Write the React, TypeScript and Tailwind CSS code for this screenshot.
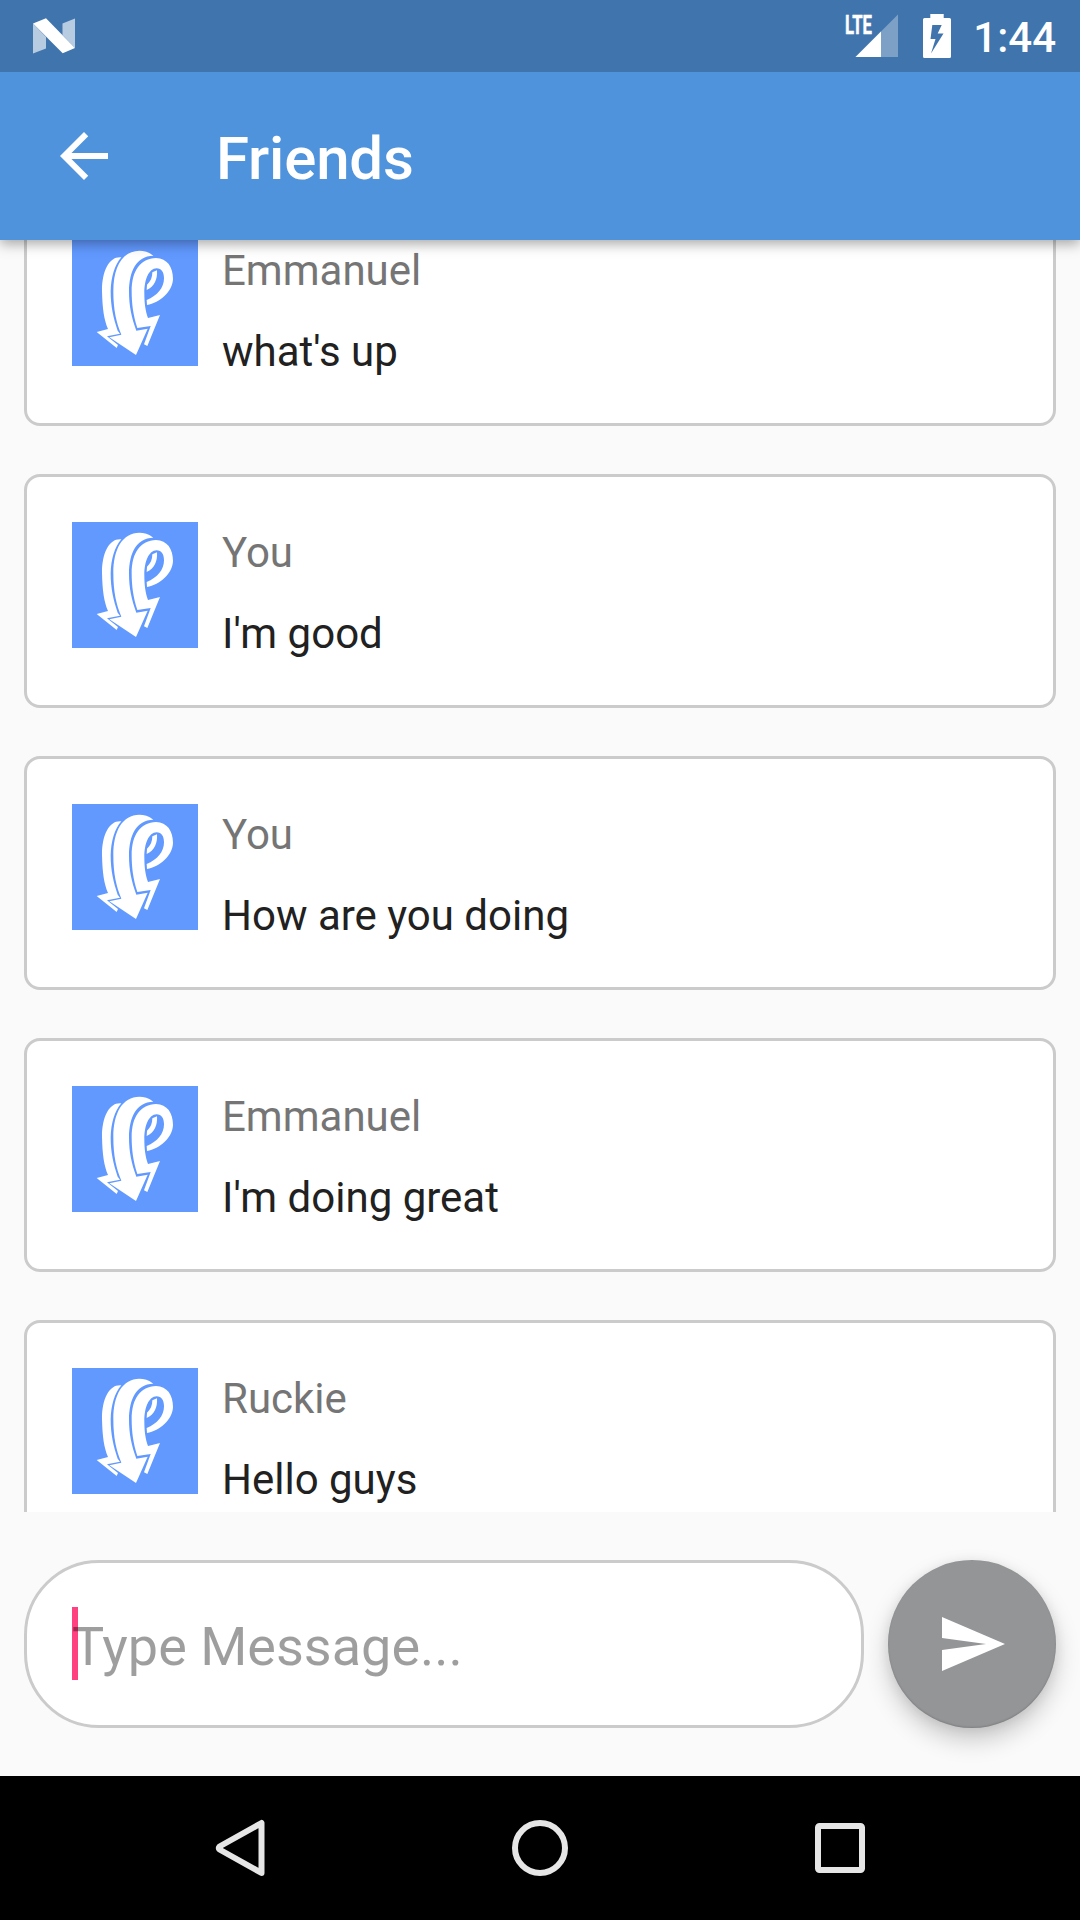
const messages = [
  { name: "Emmanuel", text: "what's up" },
  { name: "You", text: "I'm good" },
  { name: "You", text: "How are you doing" },
  { name: "Emmanuel", text: "I'm doing great" },
  { name: "Ruckie", text: "Hello guys" },
];

function Avatar() {
  return (
    <svg viewBox="36 36 378 378" className="size-[126px] shrink-0 bg-[#6199ff]" fill="#fff">
      <path d="M184 88C150 84 126 125 126 188C127 240 132 275 144 303L110 312L170 360L174 351L141 325L180 317L173 308C160 270 152 235 152 190C153 147 164 110 184 88Z" />
      <path d="M280 83C266 71 252 68 238 68C188 69 160 115 160 190C160 245 169 285 184 320L148 328L228 381L263 302L229 308C215 270 207 235 207 190C208 130 228 84 280 83Z" />
      <path d="M232 300C219 260 215 225 215 190C215 127 242 91 288 90C322 91 339 117 339 153C338 190 300 224 261 231L260 216C292 203 312 180 312 151C312 132 304 121 290 121C266 122 253 155 253 195C253 225 256 248 264 270L300 261L262 354L252 349L272 294Z" />
      <path d="M277 133L291 127C293 152 284 177 260 186L261 170C272 161 277 148 277 133Z" />
    </svg>
  );
}

function StatusBar() {
  return (
    <div className="relative z-20 flex h-[72px] shrink-0 items-start bg-[#4074ad] text-white">
      <svg viewBox="0 0 42 36" className="mt-[18px] ml-[33px] h-9 w-[42px]" fill="#fff">
        <path d="M0 5.5L13 19V30.5L0 35.5Z" opacity="0.63" />
        <path d="M29.5 5.5L42 .5V30L29.5 17Z" opacity="0.63" />
        <path d="M0 5.5L13 .3L42 30L29.7 35.3Z" />
      </svg>
      <svg viewBox="-4 -10 58 54" className="mt-1 ml-auto h-[54px] w-[58px] overflow-visible" fill="#fff">
        <path d="M10.5 43H53V.5Z" opacity="0.32" />
        <path d="M0 0H28V21H0Z" fill="#4074ad" />
        <path d="M10.5 43H36V17.5Z" />
        <text
          x="0"
          y="19.6"
          textLength="27"
          lengthAdjust="spacingAndGlyphs"
          stroke="#fff"
          strokeWidth="0.5"
          className="font-['Roboto'] text-[26px] font-bold"
        >
          LTE
        </text>
      </svg>
      <svg viewBox="0 0 28 44" className="mt-[14px] ml-6 h-[44px] w-[28px]">
        <path
          fill="#fff"
          fillRule="evenodd"
          d="M7.3 0H20.7V4H26.5Q28 4 28 5.5V42.5Q28 44 26.5 44H1.5Q0 44 0 42.5V5.5Q0 4 1.5 4H7.3ZM9.3 11L7.5 25H12.5L8 39.5L20.5 19.5H14.7L18.7 11Z"
        />
      </svg>
      <span className="mt-[14px] mr-[24px] ml-[22px] text-[42px] leading-[48px] font-medium">1:44</span>
    </div>
  );
}

export default function App() {
  return (
    <div className="flex h-[1920px] w-[1080px] flex-col overflow-hidden bg-[#fafafa] font-['Roboto',sans-serif]">
      <StatusBar />
      <header className="relative z-10 flex h-[168px] shrink-0 items-center bg-[#4e93db] text-white shadow-[0_4px_12px_rgba(0,0,0,0.34)]">
        <svg viewBox="0 0 24 24" className="ml-12 size-[72px]" fill="#fff">
          <path d="M20 11H7.83l5.59-5.59L12 4l-8 8 8 8 1.41-1.41L7.83 13H20v-2z" />
        </svg>
        <h1 className="mt-[6px] ml-24 text-[60px] leading-[70px] font-medium tracking-[-0.2px]">Friends</h1>
      </header>

      <main className="h-[1272px] shrink-0 overflow-hidden px-6">
        <div className="-mt-12 flex flex-col gap-12">
          {messages.map((m, i) => (
            <article key={i} className="flex h-[234px] shrink-0 gap-6 rounded-[16px] border-[3px] border-[#cbcbcb] bg-white p-[45px]">
              <Avatar />
              <div className="flex flex-col gap-[21px] pt-px text-[42px] leading-[60px] whitespace-nowrap">
                <span className="text-[#757575]">{m.name}</span>
                <span className="text-[#212121]">{m.text}</span>
              </div>
            </article>
          ))}
        </div>
      </main>

      <footer className="flex h-[264px] shrink-0 gap-6 px-6 pt-12">
        <div className="relative flex h-[168px] w-[840px] items-center rounded-[75px] border-[3px] border-[#cbcbcb] bg-white pl-[45px]">
          <i className="absolute top-[44px] left-[45px] h-[73px] w-[6px] bg-[#ff4081]" />
          <span className="relative mt-[5px] text-[54px] leading-[64px] text-black/38">Type Message...</span>
        </div>
        <button className="flex size-[168px] items-center justify-center rounded-full bg-[#949597] shadow-[0_12px_24px_rgba(0,0,0,0.2),0_2px_12px_rgba(0,0,0,0.08),inset_0_-1px_2px_rgba(0,0,0,0.15)]">
          <svg viewBox="0 0 63 54" className="ml-[3px] h-[54px] w-[63px]" fill="#fff">
            <path d="M0 0L63 27L0 54V33L44 27L0 21Z" />
          </svg>
        </button>
      </footer>

      <nav className="flex h-36 shrink-0 items-center justify-center gap-[240px] bg-black">
        <svg viewBox="0 0 60 60" className="size-[60px]" fill="none" stroke="#e6e6e6" strokeWidth="6" strokeLinejoin="round">
          <path d="M51.5 5V55L9.5 31.5Q8 30 9.5 28.5Z" />
        </svg>
        <svg viewBox="0 0 60 60" className="size-[60px]" fill="none" stroke="#e6e6e6" strokeWidth="6">
          <circle cx="30" cy="30" r="25" />
        </svg>
        <svg viewBox="0 0 60 60" className="size-[60px]" fill="none" stroke="#e6e6e6" strokeWidth="6">
          <rect x="8" y="8" width="44" height="44" rx="1.5" />
        </svg>
      </nav>
    </div>
  );
}
